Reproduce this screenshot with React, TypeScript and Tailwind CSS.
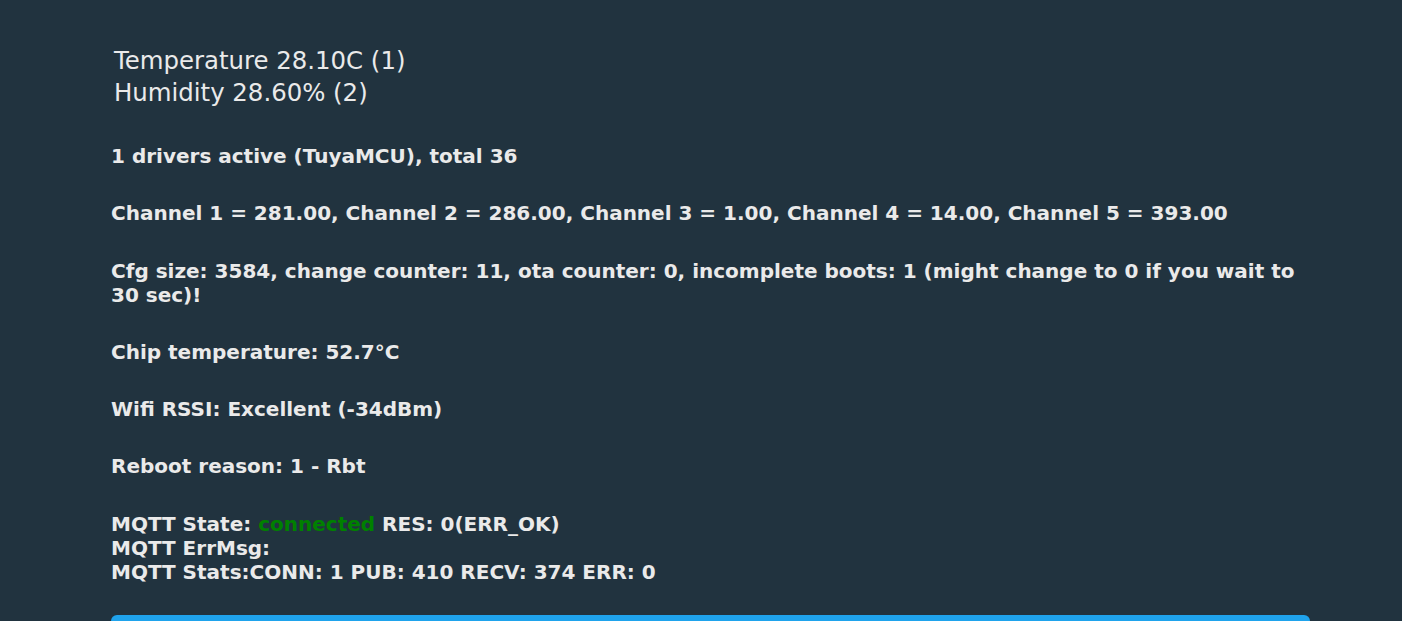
import React from 'react';

const Line: React.FC<{ children: React.ReactNode; className?: string }> = ({ children, className = '' }) => (
    <div className={`font-bold text-[20px] leading-[24px] ${className}`}>{children}</div>
);

export default function App() {
    return (
        <div
            className="h-[621px] w-full bg-[#21333f] text-[#eaeaea] overflow-hidden"
            style={{ fontFamily: '"DejaVu Sans", Verdana, sans-serif' }}
        >
            <div className="ml-[111px] w-[1199px] pt-[45px]">
                <div className="pl-[3px] text-[24.4px] leading-[32px]">
                    <div>Temperature 28.10C (1)</div>
                    <div>Humidity 28.60% (2)</div>
                </div>
                <div className="mt-[35px] flex flex-col gap-[33.3px]">
                    <Line>1 drivers active (TuyaMCU), total 36</Line>
                    <Line>
                        Channel 1 = 281.00, Channel 2 = 286.00, Channel 3 = 1.00, Channel 4 = 14.00, Channel 5 = 393.00
                    </Line>
                    <Line>
                        Cfg size: 3584, change counter: 11, ota counter: 0, incomplete boots: 1 (might change to 0 if you wait to 30 sec)!
                    </Line>
                    <Line>Chip temperature: 52.7°C</Line>
                    <Line>Wifi RSSI: Excellent (-34dBm)</Line>
                    <Line>Reboot reason: 1 - Rbt</Line>
                    <Line>
                        <div>
                            MQTT State: <span className="text-[#008000]">connected</span> RES: 0(ERR_OK)
                        </div>
                        <div>MQTT ErrMsg: </div>
                        <div>MQTT Stats:CONN: 1 PUB: 410 RECV: 374 ERR: 0</div>
                    </Line>
                </div>
                <div className="mt-[31px] h-[40px] w-full rounded-[6px] bg-[#1fa3ec]"></div>
            </div>
        </div>
    );
}
